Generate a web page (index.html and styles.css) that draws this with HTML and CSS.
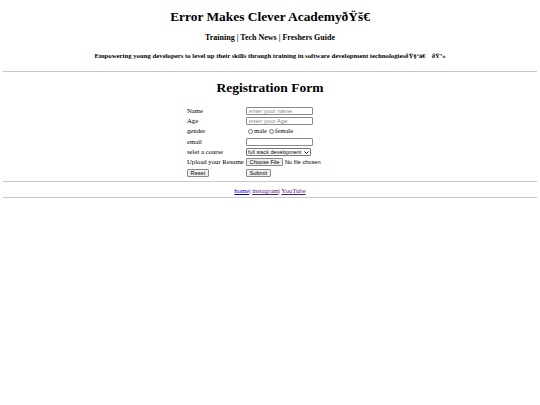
FILE: index.html
```html
<!DOCTYPE html>
<html>
<head>
<meta charset="utf-8">
<title>Error Makes Clever Academy</title>
<link rel="stylesheet" href="styles.css">
</head>
<body>
<h1 class="title">Error Makes Clever AcademyðŸš€</h1>
<h3 class="nav">Training | Tech News | Freshers Guide</h3>
<h5 class="tagline">Empowering young developers to level up their skills through training in software development technologiesðŸ§‘â€&#x8D;ðŸ’»</h5>
<hr class="rule rule-top">
<h2 class="form-title">Registration Form</h2>
<form class="reg">
  <label class="lbl">Name</label>
  <div class="cell"><input class="field" type="text" placeholder="enter your name"></div>
  <label class="lbl">Age</label>
  <div class="cell"><input class="field" type="text" placeholder="enter your Age"></div>
  <label class="lbl">gender</label>
  <div class="cell radios"><span class="radio"></span>male<span class="radio"></span>female</div>
  <label class="lbl">email</label>
  <div class="cell"><input class="field" type="email"></div>
  <label class="lbl">selet a course</label>
  <div class="cell"><span class="select">full stack development<svg class="caret" viewBox="0 0 10 6" width="5" height="3"><path d="M1 1 L5 5 L9 1" fill="none" stroke="#000" stroke-width="1.8"/></svg></span></div>
  <label class="lbl">Upload your Resume</label>
  <div class="cell file"><span class="btn">Choose File</span><span class="nofile">No file chosen</span></div>
  <div class="cell"><span class="btn">Reset</span></div>
  <div class="cell"><span class="btn">Submit</span></div>
</form>
<hr class="rule rule-mid">
<p class="links"><a class="lnk" href="#">home</a>| <a class="lnk visited" href="#">instagram</a>| <a class="lnk visited" href="#">YouTube</a></p>
<hr class="rule rule-bot">
</body>
</html>
```

FILE: styles.css
```css
html, body {
  margin: 0;
  padding: 0;
  background: #fff;
}
body {
  padding: 0 3px;
  font-family: "Liberation Serif", "Times New Roman", serif;
  color: #000;
}
.title {
  margin: 8.5px 0 0;
  font-size: 13.4px;
  line-height: 15px;
  text-align: center;
}
.nav {
  margin: 9.5px 0 0;
  font-size: 8px;
  line-height: 10px;
  text-align: center;
}
.tagline {
  margin: 8.6px 0 0;
  font-size: 6.75px;
  line-height: 8px;
  text-align: center;
  white-space: nowrap;
}
.rule {
  height: 0;
  border: 0;
  border-top: 1px solid #c8c8c8;
  margin: 0;
}
.rule-top { margin-top: 11px; }
.form-title {
  margin: 9.8px 0 0;
  font-size: 13.5px;
  line-height: 14px;
  text-align: center;
}
.reg {
  display: grid;
  grid-template-columns: 59px auto;
  grid-auto-rows: 8px;
  row-gap: 2.3px;
  margin: 11.5px 0 0 184px;
  width: 150px;
  font-size: 6.7px;
}
.lbl, .cell {
  display: flex;
  align-items: center;
  line-height: 8px;
  white-space: nowrap;
}
.field {
  box-sizing: border-box;
  width: 67px;
  height: 8px;
  margin: 0;
  padding: 0 1.5px;
  border: 0.6px solid #8a8a8a;
  border-radius: 1px;
  font-family: "Liberation Sans", Arial, sans-serif;
  font-size: 6px;
  background: #fff;
  outline: none;
}
.field::placeholder {
  color: #8a8a8a;
}
.radio {
  display: inline-block;
  box-sizing: border-box;
  width: 5px;
  height: 5px;
  margin: 0 1px 0 2px;
  border: 0.6px solid #777;
  border-radius: 50%;
}
.select {
  display: inline-flex;
  align-items: center;
  justify-content: space-between;
  box-sizing: border-box;
  width: 65px;
  height: 8px;
  padding: 0 1px;
  border: 0.6px solid #777;
  border-radius: 1px;
  font-family: "Liberation Sans", Arial, sans-serif;
  font-size: 5.4px;
}
.caret {
  flex: none;
  margin-left: 1px;
}
.btn {
  display: inline-flex;
  align-items: center;
  box-sizing: border-box;
  height: 8px;
  padding: 0 2.6px;
  background: #efefef;
  border: 0.6px solid #8a8a8a;
  border-radius: 1px;
  font-family: "Liberation Sans", Arial, sans-serif;
  font-size: 5.6px;
}
.nofile {
  margin-left: 2px;
  font-family: "Liberation Sans", Arial, sans-serif;
  font-size: 5.6px;
}
.rule-mid { margin-top: 4.6px; }
.links {
  margin: 3.8px 0 0;
  font-size: 6.7px;
  line-height: 9px;
  text-align: center;
}
.lnk { color: #0000ee; }
.lnk.visited { color: #551a8b; }
.rule-bot { margin-top: 2.2px; }
```
